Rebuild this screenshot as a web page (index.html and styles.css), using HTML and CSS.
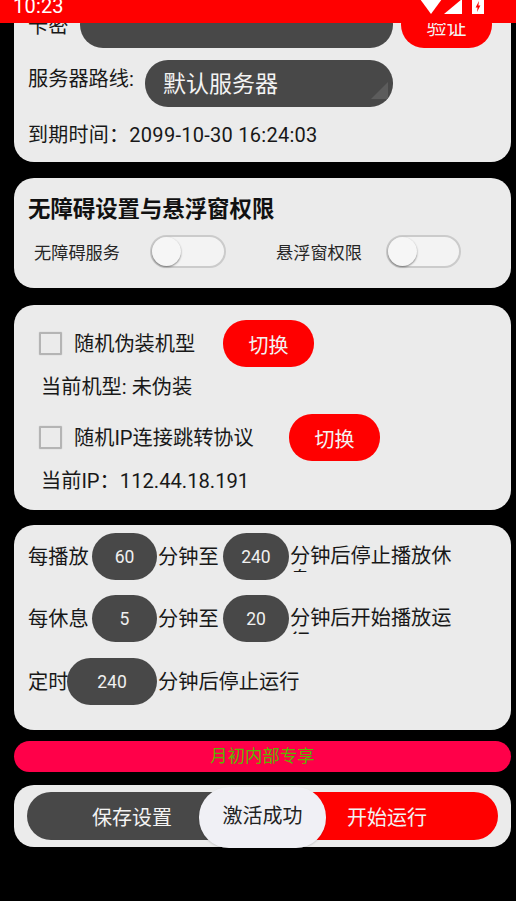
FILE: index.html
```html
<!DOCTYPE html>
<html lang="zh-CN">
<head>
<meta charset="utf-8">
<title>设置</title>
<link rel="stylesheet" href="styles.css">
</head>
<body>
<div class="phone">
  <header class="status">
    <span class="clock">10:23</span>
    <svg class="status-icons" width="66" height="14" viewBox="0 0 66 14" aria-hidden="true">
      <path d="M0 -1 L22 -1 L11 14 Z" fill="#fff"/>
      <path d="M42 -1 L42 14 L24 14 Z" fill="#fff"/>
      <path d="M52 -1 H64 V14 H52 Z" fill="#fff"/>
      <path d="M59 1 L55.6 7.4 H57.6 L57 12 L60.4 5.6 H58.4 Z" fill="#f00"/>
    </svg>
  </header>

  <main class="screen">
    <section class="card card-login">
      <div class="row key-row">
        <span class="text key-label">卡密</span>
        <div class="field key-field"></div>
        <button class="btn btn-red btn-verify">验证</button>
      </div>
      <div class="row server-row">
        <span class="text server-label">服务器路线:</span>
        <div class="field spinner">
          默认服务器
          <svg class="spinner-arrow" width="17" height="17" viewBox="0 0 17 17" aria-hidden="true"><path d="M0 17 L17 0 V17 Z" fill="#5c5c5c"/></svg>
        </div>
      </div>
      <p class="text expiry">到期时间：2099-10-30 16:24:03</p>
    </section>

    <section class="card card-perm">
      <h2 class="title">无障碍设置与悬浮窗权限</h2>
      <div class="row switches">
        <div class="row switch-group">
          <span class="switch-label label-a">无障碍服务</span>
          <span class="switch"><span class="thumb"></span></span>
        </div>
        <div class="row switch-group">
          <span class="switch-label label-b">悬浮窗权限</span>
          <span class="switch"><span class="thumb"></span></span>
        </div>
      </div>
    </section>

    <section class="card card-spoof">
      <div class="row check-row">
        <span class="checkbox"></span>
        <span class="text check-label label-model">随机伪装机型</span>
        <button class="btn btn-red btn-switch">切换</button>
      </div>
      <p class="text info">当前机型: 未伪装</p>
      <div class="row check-row check-row-2">
        <span class="checkbox"></span>
        <span class="text check-label label-ip">随机IP连接跳转协议</span>
        <button class="btn btn-red btn-switch">切换</button>
      </div>
      <p class="text info">当前IP：112.44.18.191</p>
    </section>

    <section class="card card-timer">
      <div class="row timer-row">
        <span class="text prefix">每播放</span>
        <span class="pill pill-a">60</span>
        <span class="text middle">分钟至</span>
        <span class="pill pill-b">240</span>
        <span class="text clipped">分钟后停止播放休息</span>
      </div>
      <div class="row timer-row timer-row-2">
        <span class="text prefix">每休息</span>
        <span class="pill pill-a">5</span>
        <span class="text middle">分钟至</span>
        <span class="pill pill-b">20</span>
        <span class="text clipped">分钟后开始播放运行</span>
      </div>
      <div class="row timer-row timer-row-3">
        <span class="text prefix-short">定时</span>
        <span class="pill pill-wide">240</span>
        <span class="text middle">分钟后停止运行</span>
      </div>
    </section>

    <div class="banner">月初内部专享</div>

    <section class="card card-actions">
      <button class="btn action action-save">保存设置</button>
      <button class="btn btn-red action action-start">开始运行</button>
      <div class="toast">激活成功</div>
    </section>
  </main>
</div>
</body>
</html>
```

FILE: styles.css
```css
* { box-sizing: border-box; }

html, body {
  margin: 0;
  height: 100%;
  background: #000;
}

body {
  font-family: Roboto, "Noto Sans CJK SC", sans-serif;
  color: #181818;
  overflow: hidden;
}

.phone {
  position: relative;
  width: 516px;
  height: 901px;
  overflow: hidden;
  background: #000;
}

.status {
  position: absolute;
  top: 0;
  left: 0;
  right: 0;
  z-index: 5;
  height: 23px;
  background: #f00;
  overflow: hidden;
  display: flex;
  justify-content: space-between;
  align-items: flex-start;
  padding: 0 30px 0 13px;
}

.clock {
  margin-top: -6px;
  color: #fff;
  font-size: 20px;
  line-height: 24px;
  letter-spacing: 0.2px;
}

.status-icons { display: block; }

.screen {
  margin-top: -10px;
  padding: 0 5px 0 14px;
  display: flex;
  flex-direction: column;
}

.card {
  background: #ebebeb;
  border-radius: 20px;
}

.row {
  display: flex;
  align-items: center;
}

.text {
  margin: 0;
  font-size: 20.2px;
  line-height: 28px;
  white-space: nowrap;
}

.btn {
  display: block;
  border: 0;
  padding: 0;
  margin: 0;
  font-family: inherit;
  font-size: 20px;
  color: #f3f3f3;
  text-align: center;
}

.btn-red { background: #f00; }

.field {
  height: 47px;
  background: #484848;
}

/* card 1 */
.card-login {
  height: 172px;
  padding: 11px 14px 0;
}

.key-row { height: 47px; }

.key-label {
  width: 52px;
  padding-top: 3px;
}

.key-field {
  width: 313px;
  border-radius: 23px;
}

.btn-verify {
  width: 91px;
  height: 47px;
  margin-left: 8px;
  border-radius: 23px;
  padding-top: 3px;
}

.server-row { margin-top: 12px; }

.server-label {
  width: 117px;
  margin-top: -10px;
}

.spinner {
  position: relative;
  width: 248px;
  padding-left: 18px;
  border-radius: 23px;
  color: #f3f3f3;
  font-size: 23px;
  line-height: 49px;
  overflow: hidden;
}

.spinner-arrow {
  position: absolute;
  right: 5px;
  bottom: 8px;
}

.expiry {
  margin-top: 14px;
  font-size: 20px;
  letter-spacing: 0.27px;
}

/* card 2 */
.card-perm {
  height: 110px;
  margin-top: 16px;
  padding: 17px 14px 0;
}

.title {
  margin: 0;
  font-size: 22.4px;
  line-height: 28px;
  font-weight: 700;
  color: #111;
}

.switches {
  margin-top: 12px;
  padding-left: 6px;
  gap: 50px;
}

.switch-label {
  font-size: 17.2px;
  line-height: 24px;
  white-space: nowrap;
  padding-top: 3px;
  color: #262626;
}

.label-a { width: 116px; }
.label-b { width: 110px; }

.switch {
  position: relative;
  display: block;
  width: 76px;
  height: 33px;
  border: 2px solid #cbcbcb;
  border-radius: 17px;
  background: #f3f3f3;
}

.switch-group:last-child .switch { width: 75px; }

.thumb {
  position: absolute;
  left: 0;
  top: 0;
  width: 29px;
  height: 29px;
  border-radius: 50%;
  background: #f6f6f6;
  box-shadow: 0 1px 2px rgba(0, 0, 0, 0.45);
}

/* card 3 */
.card-spoof {
  height: 205px;
  margin-top: 17px;
  padding: 15px 14px 0 27px;
  display: flex;
  flex-direction: column;
}

.check-row { height: 47px; }
.check-row-2 { margin-top: 13px; }

.checkbox {
  width: 23px;
  height: 23px;
  flex: none;
  margin-left: -2px;
  border: 2px solid #b4b4b4;
  border-radius: 1px;
  box-shadow: 0 0 1px rgba(0, 0, 0, 0.3);
}

.check-label { margin-left: 12px; }
.label-model { width: 149px; }
.label-ip { width: 215px; }

.btn-switch {
  width: 91px;
  height: 47px;
  border-radius: 23px;
  padding-top: 1px;
}

.info { margin-top: 6px; }

/* card 4 */
.card-timer {
  height: 205px;
  margin-top: 15px;
  padding: 8px 14px 0;
}

.timer-row { height: 47px; }
.timer-row-2 { margin-top: 15px; }
.timer-row-3 { margin-top: 16px; }

.prefix { width: 60px; }
.prefix-short { width: 39px; }

.pill {
  display: flex;
  align-items: center;
  justify-content: center;
  height: 47px;
  background: #484848;
  color: #f0f0f0;
  font-size: 17.5px;
  border-radius: 24px;
  flex: none;
}

.pill-a { width: 65px; margin-left: 4px; }
.pill-b { width: 66px; margin-left: 4.4px; }
.pill-wide { width: 90px; }

.middle { margin-left: 1px; }

.clipped {
  align-self: flex-start;
  width: 163px;
  height: 28px;
  margin: 11px 0 0 1px;
  line-height: 24px;
  white-space: normal;
  overflow: hidden;
}

/* banner */
.banner {
  height: 31px;
  margin-top: 11px;
  border-radius: 16px;
  background: #ff0049;
  color: #5db400;
  font-size: 17.4px;
  line-height: 31px;
  text-align: center;
}

/* card 5 */
.card-actions {
  position: relative;
  height: 62px;
  margin-top: 13px;
  padding: 7px 13px;
  display: flex;
  justify-content: space-between;
}

.action {
  height: 48px;
  border-radius: 24px;
}

.action-save {
  width: 210px;
  background: #484848;
}

.action-start { width: 222px; }

.toast {
  position: absolute;
  left: 185px;
  top: 2px;
  width: 127px;
  height: 61px;
  border-radius: 30px;
  background: #f0f0f5;
  color: #222;
  font-size: 20px;
  line-height: 58px;
  text-align: center;
  box-shadow: 0 1px 2px rgba(0, 0, 0, 0.15);
}
```
